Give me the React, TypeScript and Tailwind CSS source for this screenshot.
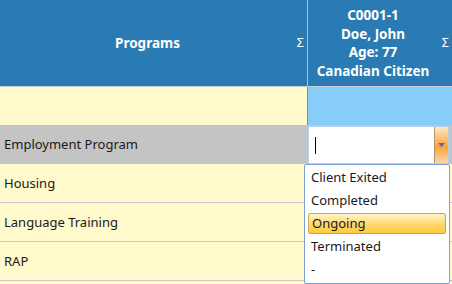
const font = "font-['Segoe_UI','Noto_Sans','Open_Sans',sans-serif]"

const rows = ["Housing", "Language Training", "RAP"]
const options = ["Client Exited", "Completed", "Ongoing", "Terminated", "-"]

export default function App() {
  return (
    <div className={`relative w-[452px] h-[284px] overflow-hidden bg-[#fff9cc] text-[13px] ${font}`}>
      <div className="grid grid-cols-[307px_1px_144px]">
        {/* header */}
        <div className="relative h-[86px] bg-[#2a7bb4] flex items-center justify-center font-bold text-white text-[13.5px] pr-[12px]">
          <span>Programs</span>
          <span className="absolute right-[3px] top-[34px] font-normal text-[12.5px]">Σ</span>
        </div>
        <div className="bg-[#9fc2dc]" />
        <div className="relative h-[86px] bg-[#2a7bb4] flex flex-col items-center justify-center font-bold text-white text-[13.5px] leading-[18.5px] pr-[14px]">
          <span>C0001-1</span>
          <span>Doe, John</span>
          <span>Age: 77</span>
          <span>Canadian Citizen</span>
          <span className="absolute right-[3px] top-[34px] font-normal text-[12.5px]">Σ</span>
        </div>

        <div className="col-span-3 h-px bg-[#c8c8c8]" />

        {/* blank row */}
        <div className="h-[38px] bg-[#fff9cc]" />
        <div className="bg-[#8d8d78]" />
        <div className="bg-[#87cdf9]" />

        {/* selected row */}
        <div className="h-[39px] bg-[#c4c4c4] flex items-center px-[4px] text-[#1a1a1a]">Employment Program</div>
        <div className="bg-[#c4c4c4]" />
        <div className="bg-[#c4c4c4] pt-[1px] pr-[3px]">
          <div className="h-[38px] bg-white border border-[#b8cde8] flex">
            <div className="flex-1 flex items-center pl-[6px]">
              <div className="w-px h-[17px] bg-black" />
            </div>
            <div className="w-[14px] border-l border-[#b09a6a] bg-[linear-gradient(#fde8c8,#f9a43a_55%,#fbd7a8)] flex items-center justify-center">
              <svg width="7" height="4" viewBox="0 0 7 4"><path d="M0 0h7L3.5 4z" fill="#4a6fb0" /></svg>
            </div>
          </div>
        </div>

        {rows.map((r) => (
          <div key={r} className="contents">
            <div className="h-[39px] bg-[#fff9cc] border-b border-[#c8c8c8] flex items-center px-[4px] pt-[2px] text-[#1a1a1a]">{r}</div>
            <div className="bg-[#c8c8c8]" />
            <div className="bg-[#fff9cc] border-b border-[#c8c8c8]" />
          </div>
        ))}
      </div>

      {/* dropdown list */}
      <div className="absolute left-[304px] top-[164px] w-[146px] h-[120px] bg-white border border-[#7b9fd6] rounded-[2px] pt-[1px] px-[2px] text-[#1a1a1a]">
        {options.map((o) => (
          <div
            key={o}
            className={
              o === "Ongoing"
                ? "h-[21px] my-[1px] mx-[1px] flex items-center px-[3px] rounded-[2px] border border-[#c9a456] bg-[linear-gradient(#fff4c8,#ffd566_60%,#ffca3e)]"
                : "h-[23px] flex items-center px-[4px]"
            }
          >
            {o}
          </div>
        ))}
      </div>
    </div>
  )
}
